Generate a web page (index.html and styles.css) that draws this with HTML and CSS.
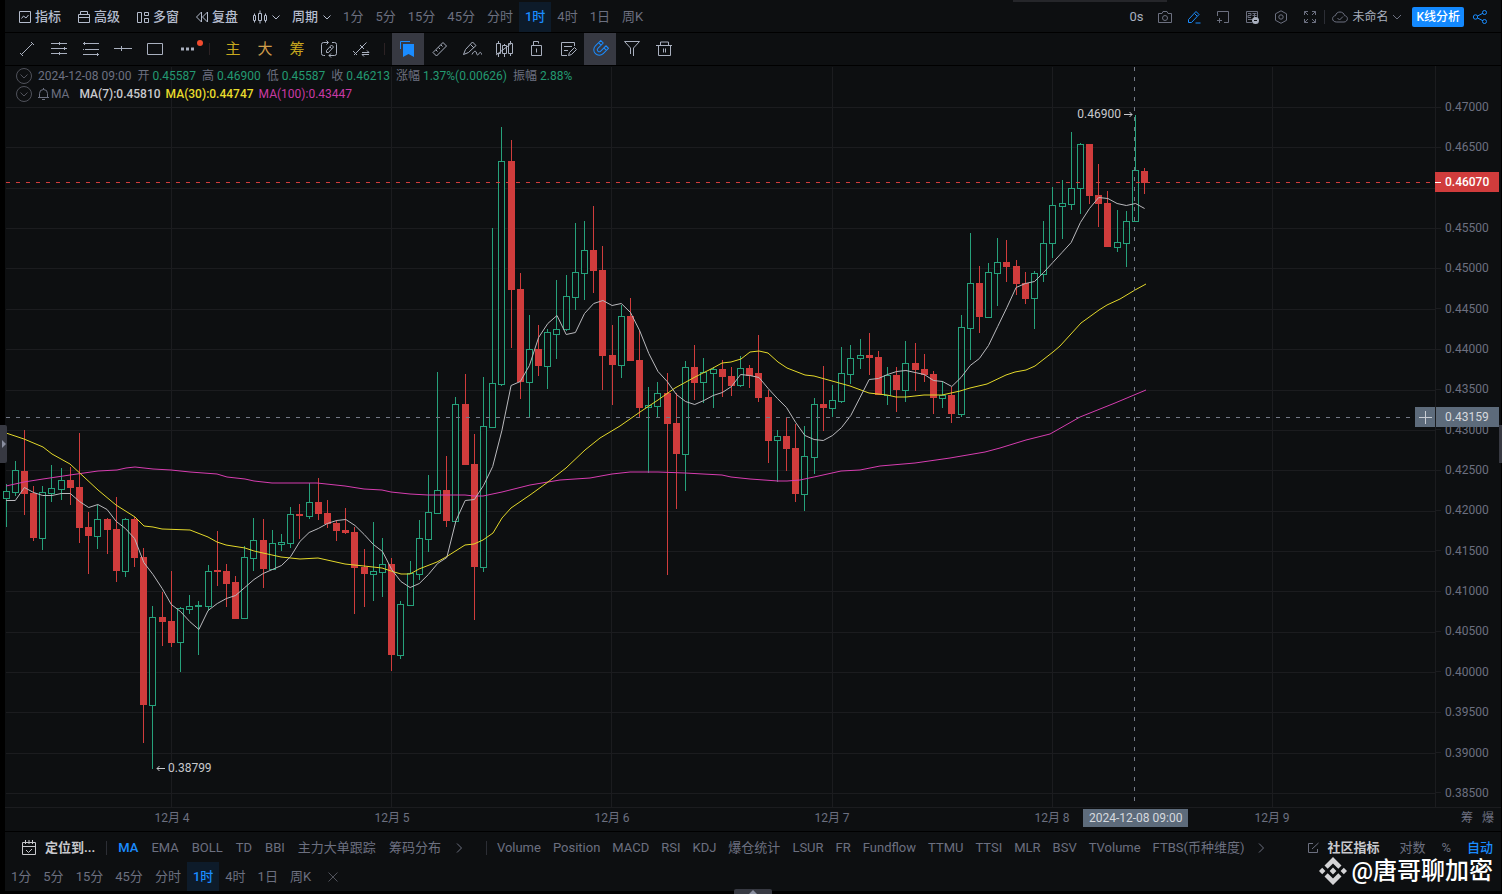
FILE: index.html
```html
<!DOCTYPE html>
<html lang="zh-CN">
<head>
<meta charset="utf-8">
<title>K线分析</title>
<link rel="stylesheet" href="styles.css">
</head>
<body>
<div class="app">
  <header class="topbar">
    <nav class="menu">
      <button class="menu-item"><svg class="icon" viewBox="0 0 14 14"><path d="M1.5 1.5h11v11h-11zM3.500 8.500l2-2.500 2.500 2 2.500-3"/></svg>指标</button>
      <button class="menu-item"><svg class="icon" viewBox="0 0 14 14"><path d="M3.500 4V1.500h7V4M1.500 4.500h11v8h-11zM1.500 7.500h11"/></svg>高级</button>
      <button class="menu-item"><svg class="icon" viewBox="0 0 14 14"><path d="M1.500 2.500h4v10h-4zM8.500 2.500h4v3h-4zM8.500 8.500h4v4h-4z"/></svg>多窗</button>
      <button class="menu-item"><svg class="icon" viewBox="0 0 14 14"><path d="M6.500 2L1.500 7l5 5zM12.500 2l-5 5 5 5z"/></svg>复盘</button>
      <button class="menu-item tight" aria-label="图表类型"><svg class="icon" viewBox="0 0 14 14"><path d="M.5 5.500h2v5h-2zM5.500 3.500h3v7h-3zM11.500 5.500h2v5h-2zM1.500 3.500v2M1.500 10.500v2M7 .5v3M7 10.500v3M12.500 3.500v2M12.500 10.500v2"/></svg><svg class="chev" viewBox="0 0 10 10"><path d="M1.500 3.500L5 7l3.500-3.500"/></svg></button>
      <button class="menu-item tight">周期<svg class="chev" viewBox="0 0 10 10"><path d="M1.500 3.500L5 7l3.500-3.500"/></svg></button>
    </nav>
    <nav class="periods">
      <button>1分</button><button>5分</button><button>15分</button><button>45分</button><button>分时</button><button class="on">1时</button><button>4时</button><button>1日</button><button>周K</button>
    </nav>
    <div class="actions">
      <span class="delay">0s</span>
      <button aria-label="截图"><svg class="icon dim" viewBox="0 0 14 14"><path d="M.5 3.500H4L5 1.500h4l1 2h3.500v9H.5z"/><circle cx="7" cy="8" r="2.500"/></svg></button>
      <button aria-label="画线"><svg class="icon blue" viewBox="0 0 14 14"><path d="M1.500 12.500v-3l7.500-8 3 3-7.500 8zM7.500 3.500l2.500 2.500M8.500 13h5"/></svg></button>
      <button aria-label="添加窗口"><svg class="icon dim" viewBox="0 0 14 14"><path d="M1.500 6V1.500h11v11H8M3.500 8v5M1 10.500h5"/></svg></button>
      <button aria-label="爆仓"><svg class="icon dim" viewBox="0 0 14 14"><path d="M12.500 8V1.500H1.500v11H7M3 3.500h3v2H3v2h3M7.500 3.500h4M7.500 5.500h4M9.500 3v5M3 9.500h4"/><circle class="solid" cx="10.500" cy="10.500" r="3.500"/><path class="light" d="M9 10.500h3"/></svg></button>
      <button aria-label="设置"><svg class="icon dim" viewBox="0 0 14 14"><path d="M7 .8l5.500 3v6.500L7 13.300l-5.500-3V3.800z"/><circle cx="7" cy="7" r="2.200"/></svg></button>
      <button aria-label="全屏"><svg class="icon dim" viewBox="0 0 14 14"><path d="M1.500 5V1.500H5M9 1.500h3.500V5M12.500 9v3.500H9M5 12.500H1.500V9M1.500 1.500L5 5M12.500 1.500L9 5M12.500 12.500L9 9M1.500 12.500L5 9"/></svg></button>
      <i class="divider"></i>
      <button class="layout-name"><svg class="icon wide dim" viewBox="0 0 16 14"><path d="M4.500 12C2 12 .6 10.500.6 8.700S2 5.800 3.500 5.600C4 3.200 5.800 2 8 2s4 1.300 4.500 3.600c1.700.2 2.900 1.400 2.900 3.100S14 12 12 12zM5.500 8l2 2L11 6.500"/></svg>未命名<svg class="chev dim" viewBox="0 0 10 10"><path d="M1 3l4 4 4-4"/></svg></button>
      <button class="primary">K线分析</button>
      <button aria-label="分享"><svg class="icon wide blue" viewBox="0 0 16 14"><path d="M5.500 6L11 3.200M5.500 8L11 10.800"/><circle cx="3.500" cy="7" r="2.200"/><circle cx="12.500" cy="2.500" r="2"/><circle cx="12.500" cy="11.500" r="2"/></svg></button>
    </div>
    <i class="top-tab"></i>
  </header>

  <div class="tools">
    <button aria-label="线段"><svg viewBox="0 0 20 20"><path d="M4.500 15.500l11-11M3 14l3 3M14 3l3 3"/></svg></button>
    <button aria-label="平行线"><svg viewBox="0 0 20 20"><path d="M2 4.500h16M2 9.500h16M2 14.500h16M10.500 3v3M15.500 8v3M10.500 13v3"/></svg></button>
    <button aria-label="斐波那契"><svg viewBox="0 0 20 20"><path d="M2 4.500h16M4 10.500h14M2 15.500h16M3.500 3v3M16.500 14v3M2.500 10v1"/></svg></button>
    <button aria-label="水平线"><svg viewBox="0 0 20 20"><path d="M1 9.500h18M8.500 7v5"/></svg></button>
    <button aria-label="矩形"><svg viewBox="0 0 20 20"><path d="M2.500 4.500h15v11h-15z"/></svg></button>
    <button class="more" aria-label="更多"><svg viewBox="0 0 20 20"><path class="fill" d="M4 8.500h3v3H4zM9 8.500h3v3H9zM14 8.500h3v3h-3z"/></svg><i class="dot"></i></button>
    <i class="divider"></i>
    <button class="glyph gold">主</button>
    <button class="glyph amber">大</button>
    <button class="glyph gold">筹</button>
    <button aria-label="同步画线"><svg viewBox="0 0 20 20"><path d="M6 16.500H4.500a2 2 0 01-2-2v-9a2 2 0 012-2H9M7.500 1.500l2 2-2 2M13 3.500h2.500a2 2 0 012 2v9a2 2 0 01-2 2H10M12 14.500l-2 2 2 2M7.500 13.500v-2l5-5.500 2 2-5 5.500zM11 8l1.500 1.500"/></svg></button>
    <button aria-label="切换画线"><svg viewBox="0 0 20 20"><path d="M3 16L15.500 3.500M2 12l4 4M9 6l4 4M11 13.500h7l-2-2M18 15.500h-7l2 2"/></svg></button>
    <i class="divider second"></i>
    <button class="on" aria-label="收藏"><svg class="blue" viewBox="0 0 20 20"><path d="M2.500 10V2.500H12"/><path class="fill" d="M5 5h11v13l-5.500-3L5 18z"/></svg></button>
    <button aria-label="测量"><svg viewBox="0 0 20 20"><path d="M3 13.500L13 3.500l3.500 3.500-10 10zM6 11l1.500 1.500M8.500 8.500L10 10M11 6l1.500 1.500"/></svg></button>
    <button aria-label="画笔"><svg viewBox="0 0 20 20"><path d="M1.500 15.500l2-5 7-7.500 3.500 3.500-7.500 7zM8.500 5.500L12 9M10 15.500c2-4 4-4 4.500-1.500s1.500 2.500 2.500.5 2.500-1 2.500 1"/></svg></button>
    <button aria-label="K线对比"><svg viewBox="0 0 20 20"><path d="M2.500 4.500h4v10h-4zM8.500 6.500h4v8h-4zM14.500 4.500h4v10h-4zM4.500 2v2.500M4.500 14.500V18M10.500 5v1.500M10.500 14.500V18M16.500 2v2.500M16.500 14.500V17M2 16L18 4"/></svg></button>
    <button aria-label="锁定"><svg viewBox="0 0 20 20"><path d="M5.500 6.500h10v10h-10zM7.500 6.500v-4h5v2M10.500 9.500v4"/></svg></button>
    <button aria-label="笔记"><svg viewBox="0 0 20 20"><path d="M16.500 7V3.500h-13v13H9M6 7.500h8M6 11.500h4M10.500 16.500l1-3 5-5 2 2-5 5z"/></svg></button>
    <button class="on" aria-label="磁吸"><svg class="blue" viewBox="0 0 20 20"><g transform="rotate(45 10 10)"><path d="M4.500 3.500v7.500a5.500 5.500 0 0011 0V3.500h-3.500v7.500a2 2 0 01-4 0V3.500zM4.500 6.500H8M12 6.500h3.500"/></g></svg></button>
    <button aria-label="筛选"><svg viewBox="0 0 20 20"><path d="M2.500 2.500h15l-6 6.500v8M2.500 2.500l6 6.500v6"/></svg></button>
    <button aria-label="删除"><svg viewBox="0 0 20 20"><path d="M2 6.500h16M4.500 6.500v10h12v-10M6.500 6v-3h8v3M9.500 9.500v4M11.500 9.500v4"/></svg></button>
  </div>

  <main class="chart">
    <section class="plot">
      <svg id="canvas" viewBox="5 66 1431 741" preserveAspectRatio="none" aria-label="K线图"></svg>
      <div class="legend">
        <p class="legend-row">
          <svg class="round" viewBox="0 0 16 16"><circle cx="8" cy="8" r="7.500"/><path d="M4.500 6.500L8 10l3.500-3.500"/></svg>
          <span>2024-12-08 09:00</span>
          <span>开 <b>0.45587</b></span><span>高 <b>0.46900</b></span><span>低 <b>0.45587</b></span><span>收 <b>0.46213</b></span><span>涨幅 <b>1.37%(0.00626)</b></span><span>振幅 <b>2.88%</b></span>
        </p>
        <p class="legend-row averages">
          <svg class="round" viewBox="0 0 16 16"><circle cx="8" cy="8" r="7.500"/><path d="M4.500 6.500L8 10l3.500-3.500"/></svg>
          <span class="ma-name"><svg class="bell" viewBox="0 0 13 14"><path d="M1 10.500h11M2.500 10.500v-4a4 4 0 018 0v4M5 12.500h3M6.500 1v1.500"/></svg>MA</span>
          <span class="ma7">MA(7):0.45810</span><span class="ma30">MA(30):0.44747</span><span class="ma100">MA(100):0.43447</span>
        </p>
      </div>
      <span class="mark high">0.46900<svg viewBox="0 0 9 9"><path d="M0 4.500h8M5.500 2L8 4.500 5.500 7"/></svg></span>
      <span class="mark low"><svg viewBox="0 0 9 9"><path d="M9 4.500H1M3.500 2L1 4.500 3.500 7"/></svg>0.38799</span>
      <button class="plus" aria-label="添加价格线"><svg viewBox="0 0 20 20"><path d="M4 10.500h13M10.500 4v13"/></svg></button>
    </section>
    <aside class="prices">
      <ul class="price-list">
        <li>0.47000</li><li>0.46500</li><li></li><li>0.45500</li><li>0.45000</li><li>0.44500</li><li>0.44000</li><li>0.43500</li><li>0.43000</li><li>0.42500</li><li>0.42000</li><li>0.41500</li><li>0.41000</li><li>0.40500</li><li>0.40000</li><li>0.39500</li><li>0.39000</li><li>0.38500</li>
      </ul>
      <span class="tag last">0.46070</span>
      <span class="tag cursor">0.43159</span>
    </aside>
    <div class="dates">
      <span class="date first">12月 4</span><span class="date">12月 5</span><span class="date">12月 6</span><span class="date">12月 7</span><span class="date">12月 8</span><span class="date">12月 9</span>
      <span class="date-tag">2024-12-08 09:00</span>
    </div>
    <div class="axis-tools"><button>筹</button><button>爆</button></div>
  </main>

  <footer class="footer">
    <div class="indicators">
      <button class="locate"><svg class="cal" viewBox="0 0 16 16"><path d="M1.500 2.500h13v12h-13zM1.500 6.500h13M4.500 0v4M8 0v4M11.500 0v4M5 10l2.500 2.500L11 9"/></svg>定位到...</button>
      <i class="divider"></i>
      <nav class="ind-list main-list">
        <button class="on">MA</button><button>EMA</button><button>BOLL</button><button>TD</button><button>BBI</button><button>主力大单跟踪</button><button>筹码分布</button>
        <button aria-label="更多主图指标"><svg class="chev dim" viewBox="0 0 10 10"><path d="M3 .5L7.500 5 3 9.500"/></svg></button>
      </nav>
      <i class="divider"></i>
      <nav class="ind-list sub-list">
        <button>Volume</button><button>Position</button><button>MACD</button><button>RSI</button><button>KDJ</button><button>爆仓统计</button><button>LSUR</button><button>FR</button><button>Fundflow</button><button>TTMU</button><button>TTSI</button><button>MLR</button><button>BSV</button><button>TVolume</button><button>FTBS(币种维度)</button>
        <button aria-label="更多副图指标"><svg class="chev dim" viewBox="0 0 10 10"><path d="M3 .5L7.500 5 3 9.500"/></svg></button>
      </nav>
      <div class="scale">
        <button class="community"><svg class="edit" viewBox="0 0 12 12"><path d="M6 1.500H1.500v9h9V7M5 7l6.500-6"/></svg>社区指标</button>
        <button>对数</button><button>%</button><button class="on">自动</button>
      </div>
    </div>
    <nav class="periods bottom">
      <button>1分</button><button>5分</button><button>15分</button><button>45分</button><button>分时</button><button class="on">1时</button><button>4时</button><button>1日</button><button>周K</button><button aria-label="关闭"><svg class="close" viewBox="0 0 12 12"><path d="M1.500 1.500l9 9M10.500 1.500l-9 9"/></svg></button>
    </nav>
  </footer>

  <div class="watermark"><svg viewBox="0 0 28 28"><path d="M14 0l8.500 8.500-3.200 3.200L14 6.400l-5.300 5.300-3.200-3.200zM14 28l8.500-8.500-3.200-3.200L14 21.600l-5.300-5.300-3.200 3.200zM3.200 10.800L6.400 14l-3.200 3.200L0 14zM24.800 10.800L28 14l-3.200 3.200-3.200-3.200zM14 10.600l3.400 3.400-3.400 3.400-3.400-3.400z"/></svg>@唐哥聊加密</div>
  <button class="handle left" aria-label="展开左侧"></button>
  <button class="handle right" aria-label="展开右侧"></button>
  <button class="handle down" aria-label="展开底部"></button>
</div>
<script src="chart.js"></script>
</body>
</html>
```
FILE: styles.css
```css
* { box-sizing: border-box; }
body {
  margin: 0;
  background: #000;
  color: #6c7080;
  font: 13px/16px Roboto, "Noto Sans CJK SC", sans-serif;
}
button {
  display: flex;
  align-items: center;
  padding: 0;
  border: 0;
  background: none;
  color: inherit;
  font: inherit;
  white-space: nowrap;
}
svg { display: block; flex: none; fill: none; stroke: currentColor; overflow: visible; }
p, ul { margin: 0; padding: 0; list-style: none; }

.app {
  position: relative;
  display: flex;
  flex-direction: column;
  height: 100vh;
  padding: 0 1px 3px 5px;
  overflow: hidden;
}
.topbar, .tools, .chart, .footer { background: #0d0f11; }

.icon { width: 14px; height: 14px; }
.icon.wide { width: 16px; }
.chev { width: 10px; height: 10px; }
.dim { color: #6c7080; }
.blue { color: #1a8cff; }
.icon .solid { fill: #a9b0bf; stroke: none; }
.icon .light { stroke: #0d0f11; }
.fill { fill: currentColor; stroke: none; }

/* top bar */
.topbar {
  position: relative;
  display: flex;
  height: 33px;
  padding: 2px 13px 0;
  border-bottom: 1px solid #000;
}
.menu { display: flex; gap: 16px; margin-right: 9px; color: #b4bccd; font-weight: 500; }
.menu-item { gap: 3px; }
.menu-item.tight { gap: 4px; margin: 0 -4px 0 -1px; }
.periods { display: flex; }
.periods button { padding: 0 6px; }
.periods .on { background: #0d1b2a; color: #1a8cff; font-weight: 500; }
.actions { display: flex; align-items: center; gap: 15px; margin-left: auto; }
.delay { color: #a9b0bf; }
.actions .divider { margin: 0 -8px; }
.divider { width: 1px; height: 14px; background: #2c2e35; }
.layout-name { gap: 4px; color: #a9b0bf; font-size: 12px; }
.layout-name .chev { margin-right: -5px; }
.primary {
  height: 20px;
  padding: 0 4px;
  margin-right: -7px;
  border-radius: 2px;
  background: #1389ff;
  color: #fff;
  font-size: 12px;
  font-weight: 500;
}
.top-tab { position: absolute; top: 0; right: 334px; width: 154px; height: 2px; background: #25262a; }

/* drawing tools */
.tools {
  display: flex;
  align-items: center;
  height: 33px;
  padding-left: 6px;
  border-bottom: 1px solid #000;
  color: #a9b0bf;
}
.tools button { position: relative; justify-content: center; width: 32px; height: 32px; }
.tools svg { width: 20px; height: 20px; }
.tools .on { background: #373942; }
.tools .divider { margin: 0 7px 0 6px; height: 12px; background: #2c2224; }
.tools .divider.second { margin: 0 7px; }
.glyph { font-size: 15px; }
.gold { color: #c8a81e; }
.amber { color: #cf9c4a; }
.dot { position: absolute; top: 7px; right: 0; width: 6px; height: 6px; border-radius: 3px; background: #f24b2e; }

/* chart */
.chart {
  flex: 1;
  min-height: 0;
  display: grid;
  grid-template: minmax(0, 1fr) 25px / minmax(0, 1fr) 65px;
  font-size: 12px;
  line-height: 14px;
}
.plot { position: relative; }
#canvas { position: absolute; inset: 0; width: 100%; height: 100%; }
#canvas path { vector-effect: non-scaling-stroke; }
.grid-line { stroke: #1b1c1f; }
.up-wick { stroke: #26a17b; }
.up-body { stroke: #26a17b; fill: #0d0f11; }
.down-wick { stroke: #d03c3c; }
.down-body { fill: #d03c3c; stroke: none; }
.crisp { shape-rendering: crispEdges; }
.line7 { stroke: #b9b9bd; }
.line30 { stroke: #e3d82a; }
.line100 { stroke: #d63db0; }
.last-line { stroke: #d03c3c; stroke-dasharray: 4 6; }
.cross-line { stroke: #747987; stroke-dasharray: 4 6; }

.legend { position: relative; display: grid; gap: 2px; padding: 2px 0 0 11px; }
.legend-row { display: flex; align-items: center; gap: 6px; height: 16px; }
.legend-row.averages { gap: 5px; }
.legend b { color: #239a72; font-weight: 400; }
.round { width: 16px; height: 16px; color: #50525b; }
.ma-name { display: flex; align-items: center; gap: 1px; margin-right: 5px; }
.bell { width: 13px; height: 14px; }
.ma7 { color: #c8c9cd; font-weight: 500; }
.ma30 { color: #e8dc2c; font-weight: 500; }
.ma100 { color: #c93aa5; }

.mark { position: absolute; display: flex; align-items: center; gap: 3px; color: #c8c9cd; }
.mark svg { width: 9px; height: 9px; }
.mark.high { right: calc(100% * 303 / 1431); top: calc(100% * 41 / 741); }
.mark.low { left: calc(100% * 151 / 1431); top: calc(100% * 695 / 741); }
.plus {
  position: absolute;
  right: 1px;
  top: calc(100% * 341 / 741);
  width: 20px;
  height: 20px;
  background: #5d6b7b;
  color: #c8ccd3;
}

.prices { position: relative; border-left: 1px solid #1b1c1f; margin-left: -1px; }
.price-list {
  display: flex;
  flex-direction: column;
  justify-content: space-between;
  height: 100%;
  padding: 34px 0 7px;
}
.price-list li { display: flex; align-items: center; gap: 4px; height: 14px; }
.price-list li::before { content: ""; width: 5px; height: 1px; background: #1b1c1f; }
.tag { position: absolute; left: -1px; right: 2px; height: 20px; padding-left: 10px; line-height: 20px; color: #fff; font-weight: 500; }
.tag.last { top: calc(100% * 106 / 741); background: #d03c3c; }
.tag.last::before { content: ""; position: absolute; left: 0; top: 10px; width: 6px; height: 1px; background: #fff; }
.tag.cursor { top: calc(100% * 341 / 741); left: 0; padding-left: 9px; background: #5d6b7b; color: #d6d9de; font-weight: 400; }

.dates {
  position: relative;
  display: grid;
  grid-template-columns: 57fr repeat(6, 220fr) 54fr;
  align-items: center;
  border-top: 1px solid #1b1c1f;
  border-bottom: 1px solid #000;
  padding-bottom: 3px;
  text-align: center;
}
.date.first { grid-column: 2; }
.date-tag {
  position: absolute;
  top: 1px;
  left: calc(100% * 1078 / 1431);
  padding: 0 6px;
  background: #5d6b7b;
  color: #d6d9de;
  line-height: 18px;
}
.axis-tools {
  display: flex;
  justify-content: flex-end;
  align-items: center;
  gap: 9px;
  padding: 0 7px 3px 0;
  border-top: 1px solid #1b1c1f;
  border-bottom: 1px solid #000;
}

/* footer */
.footer { display: flex; flex-direction: column; height: 59px; }
.indicators { display: flex; align-items: center; height: 30px; padding: 2px 8px 0 16px; }
.locate, .community { color: #c8c9cd; font-weight: 700; }
.locate { gap: 8px; margin-right: 11px; }
.cal { width: 16px; height: 16px; }
.ind-list { display: flex; gap: 12px; }
.main-list { gap: 13px; margin: 0 22px 0 11px; }
.sub-list { margin-left: 10px; }
.ind-list .on, .scale .on { color: #1a8cff; font-weight: 500; }
.scale { display: flex; gap: 16px; margin-left: auto; }
.community { gap: 8px; margin-right: 4px; }
.edit { width: 12px; height: 12px; color: #6c7080; }
.periods.bottom { height: 29px; }
.close { width: 12px; height: 12px; margin-left: 4px; color: #50525b; }

.watermark {
  position: absolute;
  right: 9px;
  bottom: 7px;
  display: flex;
  align-items: center;
  gap: 4px;
  color: #fff;
  font: 500 24px/32px Roboto, "Noto Sans CJK SC", sans-serif;
}
.watermark svg { width: 28px; height: 28px; fill: #d4d4d6; stroke: none; }

.handle { position: absolute; justify-content: center; background: #373942; }
.handle.left, .handle.right { top: calc(100% * 425 / 894); height: 38px; }
.handle.left { left: 0; width: 7px; border-radius: 0 2px 2px 0; }
.handle.right { right: 0; width: 3px; }
.handle.down { left: calc(100% * 734 / 1502); bottom: 0; width: 38px; height: 5px; border-radius: 2px 2px 0 0; }
.handle.left::before { content: ""; border: 4px solid transparent; border-left-color: #8a8fa0; border-right: 0; }
.handle.down::before { content: ""; border: 4px solid transparent; border-bottom-color: #8a8fa0; border-top: 0; }
```
FILE: chart.js
```js
// Hourly candles: direction, high, body top, body bottom, low (canvas y units)
const candles = `
G484 491 498 527|G461 470 492 496|R430 471 494 515|R486 493 538 541|G486 492 538 550|G465 488 493 502
G468 480 489 500|R467 480 488 505|R433 487 528 543|R512 527 536 574|G505 519 536 549|R518 519 530 554
R497 529 571 582|G518 519 571 577|R517 519 558 567|R548 557 705 743|G606 617 705 769|R592 617 622 646
R571 621 643 647|G607 608 642 672|G595 606 609 614|G601 605 606 655|G565 571 606 611|R531 570 572 586
R564 571 584 607|R576 582 619 619|G546 557 618 618|G518 540 558 571|R519 540 569 588|G530 543 569 570
G534 542 544 551|G507 514 543 548|R504 514 516 539|G483 502 516 519|R478 502 514 520|R500 513 524 528
R520 523 531 541|R508 530 533 534|R527 532 568 614|R549 567 574 607|G522 571 574 601|G538 564 572 597
R558 564 655 671|G601 604 655 659|G561 573 605 606|G520 538 574 580|G475 512 539 552|G372 490 513 514
R456 490 521 527|G397 404 521 521|R374 404 465 465|R434 464 567 620|G377 426 567 572|G228 383 427 427
G127 161 384 386|R140 161 290 348|R273 289 382 399|G315 349 382 418|R325 349 366 376|G329 332 366 389
G280 329 334 359|G275 296 329 331|G223 272 297 310|G221 250 273 300|R206 250 271 293|R246 270 356 390
R325 355 365 405|G305 316 365 378|R298 316 361 361|R330 360 408 417|G387 405 407 473|G382 393 406 417
R373 393 424 575|R393 423 454 509|G361 367 454 491|R345 367 383 400|G358 372 382 403|G367 369 373 408
R360 369 377 397|R367 376 386 396|G356 368 385 387|R365 368 376 388|R335 373 398 402|R390 397 441 463
G430 436 440 482|R417 436 449 471|R424 448 494 502|G426 456 494 511|G398 404 457 474|R366 404 408 431
G385 400 408 417|G347 373 401 403|G345 358 374 384|G339 355 358 369|R333 355 358 375|R351 357 395 395
G367 375 395 405|R367 375 390 412|G341 363 390 402|R343 363 370 391|R354 369 375 382|R371 374 398 414
G381 395 398 408|R387 395 414 423|G315 327 414 417|G233 283 328 360|R266 283 317 333|G263 272 317 317
G238 262 273 306|R240 262 267 282|R260 266 284 295|R272 283 299 304|G271 273 298 329|G221 243 274 282
G187 205 243 258|G180 203 206 239|G132 188 204 210|G143 144 188 214|R144 144 196 204|R164 195 204 227
R191 203 247 247|G210 242 247 252|G211 221 243 267|G115 170 221 221|R168 171 183 194`
  .trim().split(/[|\n]/).map(s => [s[0], ...s.slice(1).split(" ").map(Number)]);

const ma7 = [500,500,487,492,495,495,493,493,501,507,504,509,521,528,538,562,574,588,
  604,611,621,629,610,603,598,595,587,579,573,569,565,556,541,532,528,523,520,519,525,534,544,551,
  569,581,587,583,574,563,557,520,500,499,485,466,430,385,381,365,337,323,315,334,332,313,303,300,
  305,303,312,330,353,371,381,394,401,404,400,395,392,386,374,375,377,388,398,407,422,435,439,440,
  435,427,415,397,379,378,374,371,370,372,374,380,381,386,377,365,358,345,326,307,287,283,281,272,
  262,252,242,222,208,197,198,203,205,203,208];

const ma30 = "6,433 24,439 43,447 52,454 70,464 98,490 116,505 135,517 144,526 153,527 162,529 190,530 208,537 217,542 226,545 245,548 254,551 263,553 281,557 300,559 318,558 327,560 345,564 364,566 382,568 391,571 401,574 410,574 419,569 437,562 446,557 465,545 474,544 483,540 493,533 502,518 511,508 530,495 548,482 566,468 585,450 600,438 620,426 640,412 658,400 675,388 695,377 713,368 722,363 731,362 741,359 750,352 759,351 768,353 778,362 787,368 805,375 814,376 832,381 850,386 869,393 887,395 896,397 906,397 924,395 942,395 960,391 970,388 987,384 1006,375 1015,372 1026,370 1035,366 1053,352 1060,346 1081,323 1099,310 1107,305 1120,299 1135,290 1146,284";
const ma100 = "6,486 24,482 43,479 70,475 98,471 117,470 126,468 135,467 153,469 171,470 190,472 217,474 227,477 245,479 254,481 272,483 317,483 345,486 364,489 382,490 391,492 410,494 428,495 465,495 474,496 483,496 502,492 530,485 560,480 590,478 612,474 630,472 658,472 685,473 703,474 722,475 731,477 750,479 778,481 787,481 800,480 814,477 841,471 860,470 880,466 915,463 950,458 985,452 1000,448 1026,440 1050,434 1080,417 1115,403 1146,390";

const STEP = 9.182;
const ORIGIN = 170.85;
const FIRST = -18;
const svg = document.getElementById("canvas");

function add(cls, d) {
  const p = document.createElementNS("http://www.w3.org/2000/svg", "path");
  p.setAttribute("class", cls);
  p.setAttribute("d", d);
  svg.append(p);
}

let grid = "";
for (let i = 0; i < 18; i++) grid += `M6 ${Math.round(107 + i * 40.36) + 0.5}H1436`;
for (let i = 0; i < 6; i++) grid += `M${Math.round(170.8 + i * 220.3) + 0.5} 67V807`;
add("grid-line crisp", grid);

const d = { G: ["", ""], R: ["", ""] };
candles.forEach(([dir, high, top, bottom, low], i) => {
  const x = Math.round(ORIGIN + (FIRST + i) * STEP);
  d[dir][0] += `M${x + 0.5} ${high}V${top}M${x + 0.5} ${bottom}V${low}`;
  const h = Math.max(bottom - top, 1);
  d[dir][1] += dir === "G" ? `M${x - 2.5} ${top + 0.5}h6v${h}h-6z` : `M${x - 3} ${top}h7v${h}h-7z`;
});
add("up-wick crisp", d.G[0]);
add("up-body crisp", d.G[1]);
add("down-wick crisp", d.R[0]);
add("down-body crisp", d.R[1]);

add("line100", "M" + ma100.replace(/ /g, "L"));
add("line30", "M" + ma30.replace(/ /g, "L"));
add("line7", "M" + ma7.map((y, i) => `${(ORIGIN + 0.5 + (FIRST + i) * STEP).toFixed(1)},${y + 0.5}`).join("L"));
add("last-line crisp", "M6 182.5H1436");
add("cross-line crisp", "M6 417.5H1415");
add("cross-line crisp", "M1134.5 67V807");
```
